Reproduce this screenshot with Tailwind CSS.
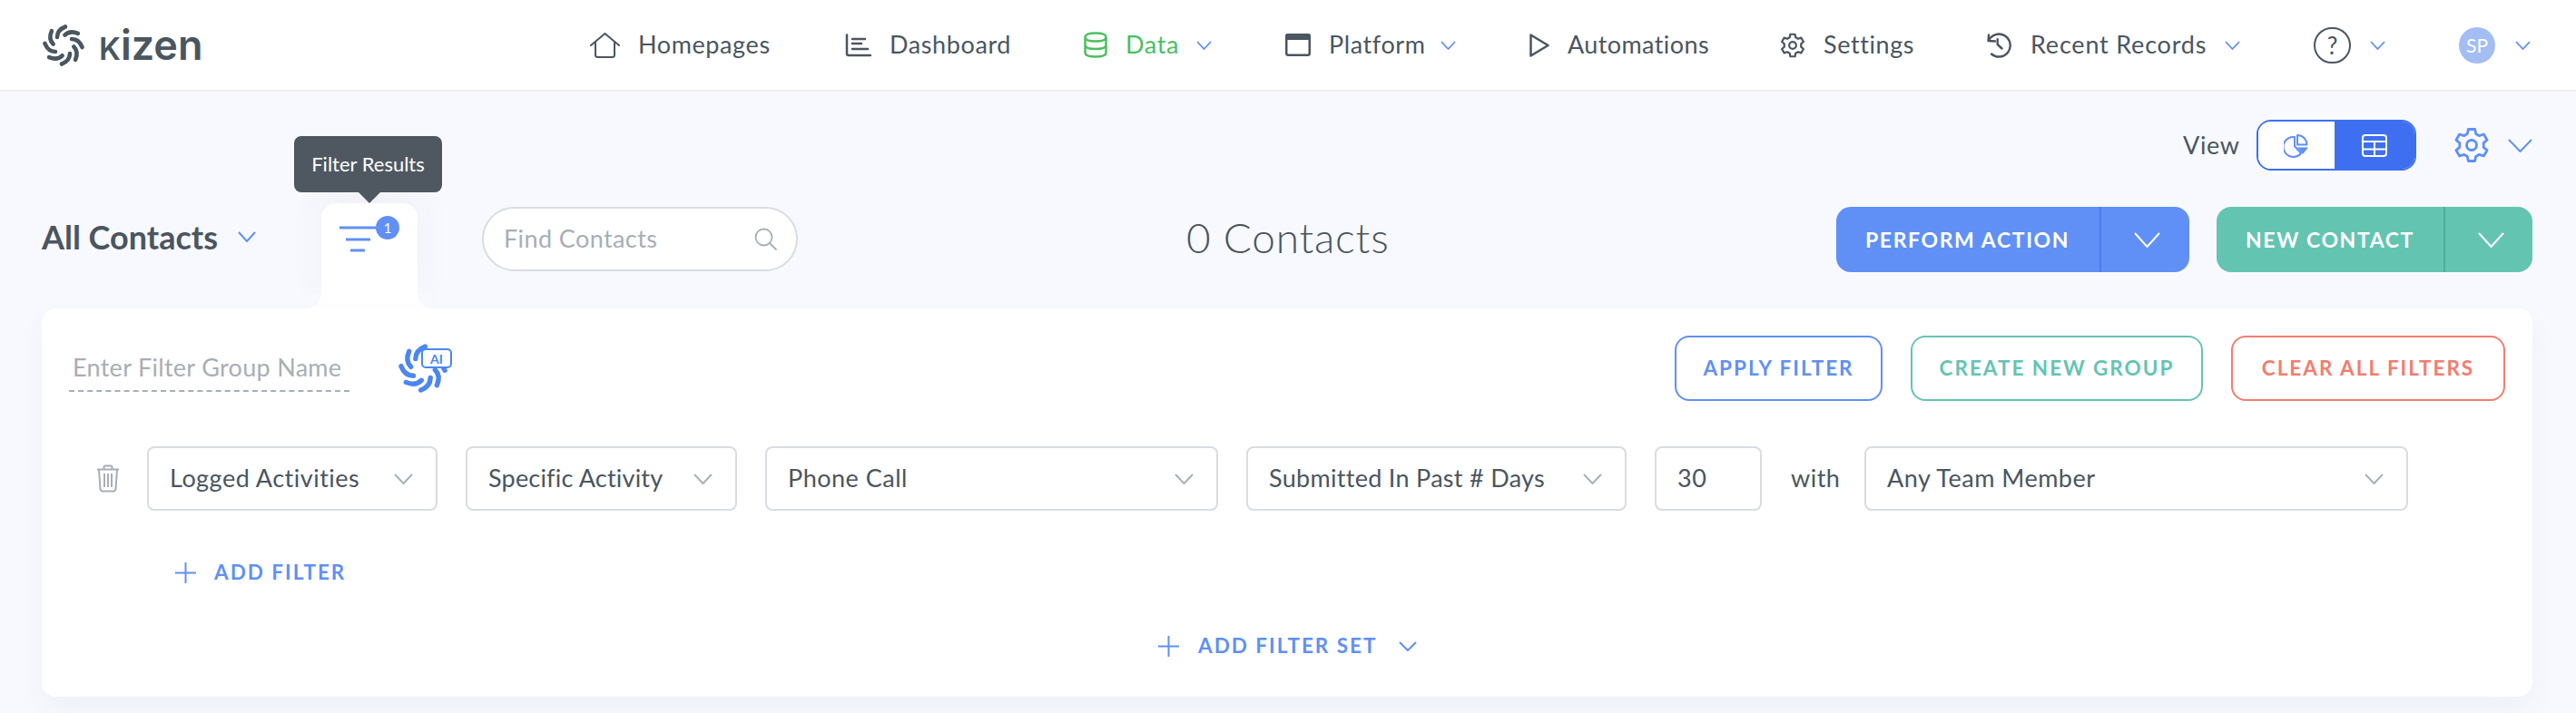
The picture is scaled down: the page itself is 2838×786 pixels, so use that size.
<!DOCTYPE html>
<html lang="en">
<head>
  <meta charset="UTF-8" />
  <title>Kizen - All Contacts</title>
  <script src="https://cdn.jsdelivr.net/npm/@tailwindcss/browser@4"></script>
</head>
<body class="bg-[#f8f9fe] font-['Lato',sans-serif] text-[#4a5660] h-[786px] w-[2838px] overflow-hidden">

  <!-- top nav -->
  <header class="h-[101px] bg-white border-b-2 border-[#eeeeee] flex items-center pl-[47px] text-[27px] tracking-[0.6px]">
    <div class="flex items-center w-[173px]">
      <svg class="w-[46px] h-[46px] shrink-0" viewBox="-23 -23 46 46" fill="none" stroke="#4a5660" stroke-width="4.600" stroke-linecap="round">
        <path d="M-7 -9Q-7 -17 2 -20.500"/>
        <path transform="rotate(45)" d="M-7 -9Q-7 -17 2 -20.500"/>
        <path transform="rotate(90)" d="M-7 -9Q-7 -17 2 -20.500"/>
        <path transform="rotate(135)" d="M-7 -9Q-7 -17 2 -20.500"/>
        <path transform="rotate(180)" d="M-7 -9Q-7 -17 2 -20.500"/>
        <path transform="rotate(225)" d="M-7 -9Q-7 -17 2 -20.500"/>
        <path transform="rotate(270)" d="M-7 -9Q-7 -17 2 -20.500"/>
        <path transform="rotate(315)" d="M-7 -9Q-7 -17 2 -20.500"/>
      </svg>
      <span class="ml-[16px] font-['Inter',sans-serif] font-semibold text-[45px] leading-none tracking-normal"><span class="uppercase text-[34px]">k</span>izen</span>
    </div>

    <a class="ml-[430px] flex items-center">
      <svg class="w-[33px] h-[28px]" viewBox="0 0 33 28" fill="none" stroke="#4a5660" stroke-width="2" stroke-linecap="round" stroke-linejoin="round"><path d="M1 14 16.500 1 32 14M6 11V24.500Q6 27 8.500 27H24.500Q27 27 27 24.500V11"/></svg>
      <span class="ml-[20px] w-[148px] whitespace-nowrap">Homepages</span>
    </a>
    <a class="ml-[79px] flex items-center">
      <svg class="w-[30px] h-[26px]" viewBox="0 0 30 26" fill="none" stroke="#4a5660" stroke-width="2.500" stroke-linecap="round"><path d="M3 1.500V22Q3 24 5 24H29M9 6H23M9 11H19M9 17H26"/></svg>
      <span class="ml-[20px] w-[134px] whitespace-nowrap">Dashboard</span>
    </a>
    <a class="ml-[80px] flex items-center text-[#4bbf5f]">
      <svg class="w-[26px] h-[29px]" viewBox="0 0 26 29" fill="none" stroke="#4bbf5f" stroke-width="2.500"><path d="M1.500 6Q1.500 1.500 13 1.500T24.500 6V23Q24.500 27.500 13 27.500T1.500 23ZM1.500 6Q1.500 10.500 13 10.500T24.500 6M1.500 14.500Q1.500 19 13 19T24.500 14.500"/></svg>
      <span class="ml-[20px] w-[55px] whitespace-nowrap">Data</span>
      <svg class="ml-[23px] w-[17px] h-[10px]" viewBox="0 0 17 10" fill="none" stroke="#6090f5" stroke-width="1.800"><path d="M1 1 8.500 9 16 1"/></svg>
    </a>
    <a class="ml-[81px] flex items-center">
      <svg class="w-[28px] h-[25px]" viewBox="0 0 28 25" fill="none"><rect x="1.250" y="1.250" width="25.500" height="22.500" rx="2" stroke="#4a5660" stroke-width="2.500"/><path d="M1 6V3Q1 1 3 1H25Q27 1 27 3V6Z" fill="#4a5660" stroke="#4a5660" stroke-width="2"/></svg>
      <span class="ml-[20px] w-[100px] whitespace-nowrap">Platform</span>
      <svg class="ml-[23px] w-[17px] h-[10px]" viewBox="0 0 17 10" fill="none" stroke="#6090f5" stroke-width="1.800"><path d="M1 1 8.500 9 16 1"/></svg>
    </a>
    <a class="ml-[81px] flex items-center">
      <svg class="w-[22px] h-[26px]" viewBox="0 0 22 26" fill="none" stroke="#4a5660" stroke-width="2.500" stroke-linejoin="round"><path d="M1.500 1.500 20.500 13 1.500 24.500Z"/></svg>
      <span class="ml-[20px] w-[153px] whitespace-nowrap tracking-[0.4px]">Automations</span>
    </a>
    <a class="ml-[81px] flex items-center">
      <svg class="w-[28px] h-[28px]" viewBox="0 0 24 24" fill="none" stroke="#4a5660" stroke-width="1.900" stroke-linejoin="round"><circle cx="12" cy="12" r="3.300"/><path d="M9.800 1.500h4.400l.6 3 2.300 1.300 2.900-1 2.200 3.800-2.300 2v2.800l2.300 2-2.200 3.800-2.900-1-2.300 1.300-.6 3H9.800l-.6-3-2.300-1.300-2.900 1-2.200-3.800 2.300-2v-2.800l-2.300-2 2.200-3.800 2.900 1 2.300-1.300z"/></svg>
      <span class="ml-[20px] w-[98px] whitespace-nowrap">Settings</span>
    </a>
    <a class="ml-[81px] flex items-center">
      <svg class="w-[29px] h-[28px]" viewBox="0 0 29 28" fill="none" stroke="#4a5660" stroke-width="2.400" stroke-linecap="round" stroke-linejoin="round"><path d="M3 8.500A12.500 12.500 0 1 1 6 23.500M3 2.500 2.500 9 10 9.500M12.700 7.300V13L17.500 17.500"/></svg>
      <span class="ml-[20px] w-[191px] whitespace-nowrap tracking-[0.8px]">Recent Records</span>
      <svg class="ml-[23px] w-[17px] h-[10px]" viewBox="0 0 17 10" fill="none" stroke="#6090f5" stroke-width="1.800"><path d="M1 1 8.500 9 16 1"/></svg>
    </a>
    <a class="ml-[81px] flex items-center">
      <span class="w-[41px] h-[40px] rounded-full border-2 border-[#4a5660] flex items-center justify-center text-[26px] leading-none tracking-normal">?</span>
      <svg class="ml-[21px] w-[17px] h-[10px]" viewBox="0 0 17 10" fill="none" stroke="#6090f5" stroke-width="1.800"><path d="M1 1 8.500 9 16 1"/></svg>
    </a>
    <a class="ml-[81px] flex items-center">
      <span class="w-[40px] h-[40px] rounded-full bg-[#a3bdf5] text-white flex items-center justify-center text-[21px] tracking-normal">SP</span>
      <svg class="ml-[22px] w-[17px] h-[10px]" viewBox="0 0 17 10" fill="none" stroke="#6090f5" stroke-width="1.800"><path d="M1 1 8.500 9 16 1"/></svg>
    </a>
  </header>

  <main class="pl-[46px] pr-[48px]">
    <!-- view switch -->
    <div class="h-[56px] mt-[31px] flex items-center justify-end">
      <span class="text-[27px] tracking-[0.6px] w-[61px] whitespace-nowrap">View</span>
      <div class="ml-[20px] w-[176px] h-[56px] rounded-[16px] border-2 border-[#3e6ff0] overflow-hidden flex">
        <div class="w-[84px] bg-white flex items-center justify-center">
          <svg class="w-[28px] h-[27px]" viewBox="0 0 28 27" fill="none" stroke="#6090f5" stroke-width="2" stroke-linejoin="round"><path d="M12 4A11 11 0 1 0 19 22L12 14Z"/><path d="M15 2A10.500 10.500 0 0 1 25.500 12.500H15Z"/><path d="M15 15.500H27L21 23Z" fill="#6090f5" stroke="none"/></svg>
        </div>
        <div class="flex-1 bg-[#3e6ff0] flex items-center justify-center">
          <svg class="w-[28px] h-[25px]" viewBox="0 0 28 25" fill="none" stroke="#ffffff" stroke-width="2"><rect x="1" y="1" width="26" height="23" rx="3"/><path d="M1 8H27M1 16.500H27M14 8V24"/></svg>
        </div>
      </div>
      <svg class="ml-[41px] w-[40px] h-[40px]" viewBox="0 0 24 24" fill="none" stroke="#6090f5" stroke-width="1.700" stroke-linejoin="round"><circle cx="12" cy="12" r="3.300"/><path d="M9.800 1.500h4.400l.6 3 2.300 1.300 2.900-1 2.200 3.800-2.300 2v2.800l2.300 2-2.200 3.800-2.900-1-2.300 1.300-.6 3H9.800l-.6-3-2.300-1.300-2.900 1-2.200-3.800 2.300-2v-2.800l-2.300-2 2.200-3.800 2.900 1 2.300-1.300z"/></svg>
      <svg class="ml-[20px] w-[27px] h-[15px]" viewBox="0 0 27 15" fill="none" stroke="#6090f5" stroke-width="2"><path d="M1 1 13.500 14 26 1"/></svg>
    </div>

    <!-- title row -->
    <div class="h-[152px] flex items-end">
      <div class="h-[116px] w-full flex items-start">
        <div class="mt-[13px] h-[48px] flex items-center w-[236px]">
          <span class="font-bold text-[36px] whitespace-nowrap w-[216px]">All Contacts</span>
          <svg class="w-[20px] h-[12px]" viewBox="0 0 20 12" fill="none" stroke="#6090f5" stroke-width="2"><path d="M1 1 10 11 19 1"/></svg>
        </div>

        <!-- filter tab with its tooltip -->
        <div class="relative ml-[72px] w-[106px] h-[116px] bg-white rounded-t-[16px] shadow-[0_-14px_40px_rgba(70,80,110,0.05)]">
          <span class="absolute -left-[16px] bottom-0 w-[16px] h-[16px] bg-white"><span class="block w-full h-full bg-[#f8f9fe] rounded-br-[16px]"></span></span>
          <span class="absolute -right-[16px] bottom-0 w-[16px] h-[16px] bg-white"><span class="block w-full h-full bg-[#f8f9fe] rounded-bl-[16px]"></span></span>
          <div class="absolute -top-[74px] left-[-30px] w-[163px] h-[62px] pb-[2px] rounded-[8px] bg-[#4f5861] text-white text-[22px] flex items-center justify-center whitespace-nowrap">Filter Results</div>
          <div class="absolute -top-[12px] left-[41px] w-0 h-0 border-x-[12px] border-x-transparent border-t-[12px] border-t-[#4f5861]"></div>
          <svg class="absolute left-[20px] top-[25px] w-[42px] h-[30px]" viewBox="0 0 42 30" fill="none" stroke="#6090f5" stroke-width="3"><path d="M0 2H40M7 15H34M12 27H28"/></svg>
          <span class="absolute left-[60px] top-[14px] w-[26px] h-[26px] rounded-full bg-[#6090f5] text-white text-[15px] flex items-center justify-center">1</span>
        </div>

        <label class="mt-[4px] ml-[71px] w-[348px] h-[71px] rounded-full border-2 border-[#d9dce0] bg-white flex items-center pl-[22px] pr-[21px] justify-between">
          <span class="text-[27px] tracking-[0.4px] text-[#a8aeb5] whitespace-nowrap">Find Contacts</span>
          <svg class="w-[25px] h-[25px]" viewBox="0 0 25 25" fill="none" stroke="#a8aeb5" stroke-width="1.800" stroke-linecap="round"><circle cx="10.500" cy="10.500" r="9"/><path d="M17 17 24 24"/></svg>
        </label>

        <div class="ml-[428px] mt-[13px] h-[48px] w-[222px] flex items-center text-[46px] tracking-[0.8px] font-light whitespace-nowrap">0 Contacts</div>

        <div class="ml-[494px] mt-[4px] w-[389px] h-[72px] rounded-[16px] bg-[#6090f5] text-white flex items-center">
          <span class="pl-[32px] w-[290px] text-[23px] font-bold tracking-[1.6px] whitespace-nowrap">PERFORM ACTION</span>
          <span class="w-[2px] h-full bg-[#4a7cf0]"></span>
          <svg class="ml-[36px] w-[29px] h-[17px]" viewBox="0 0 29 17" fill="none" stroke="#ffffff" stroke-width="2"><path d="M1 1 14.500 16 28 1"/></svg>
        </div>
        <div class="ml-[30px] mt-[4px] w-[348px] h-[72px] rounded-[16px] bg-[#64c4b2] text-white flex items-center">
          <span class="pl-[32px] w-[250px] text-[23px] font-bold tracking-[1.6px] whitespace-nowrap">NEW CONTACT</span>
          <span class="w-[2px] h-full bg-[#4fae9c]"></span>
          <svg class="ml-[36px] w-[29px] h-[17px]" viewBox="0 0 29 17" fill="none" stroke="#ffffff" stroke-width="2"><path d="M1 1 14.500 16 28 1"/></svg>
        </div>
      </div>
    </div>

    <!-- filter card -->
    <section class="relative h-[428px] bg-white rounded-[16px] shadow-[0_14px_30px_rgba(70,80,130,0.05)]">
      <div class="pt-[30px] px-[30px] flex items-start">
        <div class="w-[309px] h-[62px] border-b-2 border-dashed border-[#a8aeb5] pl-[4px] pt-[16px] text-[27px] tracking-[0.3px] leading-[38px] text-[#a8aeb5] whitespace-nowrap">Enter Filter Group Name</div>
        <div class="relative ml-[54px] mt-[9px] w-[59px] h-[54px]">
          <svg class="absolute left-0 top-0 w-[54px] h-[54px]" viewBox="-23 -23 46 46" fill="none" stroke="#4c87f0" stroke-width="4.600" stroke-linecap="round">
            <path d="M-7 -9Q-7 -17 2 -20.500"/>
            <path transform="rotate(45)" d="M-7 -9Q-7 -17 2 -20.500"/>
            <path transform="rotate(90)" d="M-7 -9Q-7 -17 2 -20.500"/>
            <path transform="rotate(135)" d="M-7 -9Q-7 -17 2 -20.500"/>
            <path transform="rotate(180)" d="M-7 -9Q-7 -17 2 -20.500"/>
            <path transform="rotate(225)" d="M-7 -9Q-7 -17 2 -20.500"/>
            <path transform="rotate(270)" d="M-7 -9Q-7 -17 2 -20.500"/>
            <path transform="rotate(315)" d="M-7 -9Q-7 -17 2 -20.500"/>
          </svg>
          <span class="absolute left-[25px] top-[5px] w-[34px] h-[22px] rounded-[5px] border-2 border-[#4c87f0] bg-white text-[#4c87f0] text-[14px] font-bold flex items-center justify-center">AI</span>
        </div>
        <div class="ml-auto flex gap-[31px] text-[22.500px] font-bold tracking-[2px] whitespace-nowrap">
          <button type="button" class="w-[229px] h-[72px] rounded-[16px] border-2 border-[#6090f5] text-[#6090f5]">APPLY FILTER</button>
          <button type="button" class="w-[322px] h-[72px] rounded-[16px] border-2 border-[#64c4b2] text-[#64c4b2]">CREATE NEW GROUP</button>
          <button type="button" class="w-[302px] h-[72px] rounded-[16px] border-2 border-[#f47c70] text-[#f47c70]">CLEAR ALL FILTERS</button>
        </div>
      </div>

      <!-- filter row -->
      <div class="mt-[50px] pl-[60px] flex items-center text-[27px] tracking-[0.5px] whitespace-nowrap">
        <svg class="w-[26px] h-[31px]" viewBox="0 0 26 31" fill="none" stroke="#a8aeb5" stroke-width="2" stroke-linejoin="round"><path d="M1 5.500H25M8.500 5.500V3Q8.500 1.500 10 1.500H16Q17.500 1.500 17.500 3V5.500M3 5.500 4.500 27Q4.700 29.500 7 29.500H19Q21.300 29.500 21.500 27L23 5.500M9 10V25M13 10V25M17 10V25"/></svg>
        <div class="ml-[30px] w-[320px] h-[71px] rounded-[8px] border-2 border-[#d9dce0] flex items-center justify-between pl-[23px] pr-[25px]">
          <span>Logged Activities</span>
          <svg class="w-[21px] h-[12px]" viewBox="0 0 21 12" fill="none" stroke="#a8b0b8" stroke-width="2"><path d="M1 1 10.500 11 20 1"/></svg>
        </div>
        <div class="ml-[31px] w-[299px] h-[71px] rounded-[8px] border-2 border-[#d9dce0] flex items-center justify-between pl-[23px] pr-[25px]">
          <span class="tracking-[0.2px]">Specific Activity</span>
          <svg class="w-[21px] h-[12px]" viewBox="0 0 21 12" fill="none" stroke="#a8b0b8" stroke-width="2"><path d="M1 1 10.500 11 20 1"/></svg>
        </div>
        <div class="ml-[31px] w-[499px] h-[71px] rounded-[8px] border-2 border-[#d9dce0] flex items-center justify-between pl-[23px] pr-[25px]">
          <span>Phone Call</span>
          <svg class="w-[21px] h-[12px]" viewBox="0 0 21 12" fill="none" stroke="#a8b0b8" stroke-width="2"><path d="M1 1 10.500 11 20 1"/></svg>
        </div>
        <div class="ml-[31px] w-[419px] h-[71px] rounded-[8px] border-2 border-[#d9dce0] flex items-center justify-between pl-[23px] pr-[25px]">
          <span class="tracking-[0.3px]">Submitted In Past # Days</span>
          <svg class="w-[21px] h-[12px]" viewBox="0 0 21 12" fill="none" stroke="#a8b0b8" stroke-width="2"><path d="M1 1 10.500 11 20 1"/></svg>
        </div>
        <div class="ml-[31px] w-[118px] h-[71px] rounded-[8px] border-2 border-[#d9dce0] flex items-center pl-[23px]">30</div>
        <span class="ml-[32px] w-[48px]">with</span>
        <div class="ml-[33px] w-[599px] h-[71px] rounded-[8px] border-2 border-[#d9dce0] flex items-center justify-between pl-[23px] pr-[25px]">
          <span>Any Team Member</span>
          <svg class="w-[21px] h-[12px]" viewBox="0 0 21 12" fill="none" stroke="#a8b0b8" stroke-width="2"><path d="M1 1 10.500 11 20 1"/></svg>
        </div>
      </div>

      <div class="mt-[56px] ml-[147px] h-[24px] flex items-center text-[#6090f5] text-[22.500px] font-bold tracking-[2px] whitespace-nowrap">
        <svg class="w-[23px] h-[23px]" viewBox="0 0 23 23" fill="none" stroke="#6090f5" stroke-width="2"><path d="M11.500 0V23M0 11.500H23"/></svg>
        <span class="ml-[20px]">ADD FILTER</span>
      </div>

      <div class="mt-[57px] ml-[1230px] h-[24px] flex items-center text-[#6090f5] text-[22.500px] font-bold tracking-[2px] whitespace-nowrap">
        <svg class="w-[23px] h-[23px]" viewBox="0 0 23 23" fill="none" stroke="#6090f5" stroke-width="2"><path d="M11.500 0V23M0 11.500H23"/></svg>
        <span class="ml-[21px] w-[197px]">ADD FILTER SET</span>
        <svg class="ml-[24px] w-[20px] h-[11px]" viewBox="0 0 20 11" fill="none" stroke="#6090f5" stroke-width="2"><path d="M1 1 10 10 19 1"/></svg>
      </div>
    </section>
  </main>
</body>
</html>
